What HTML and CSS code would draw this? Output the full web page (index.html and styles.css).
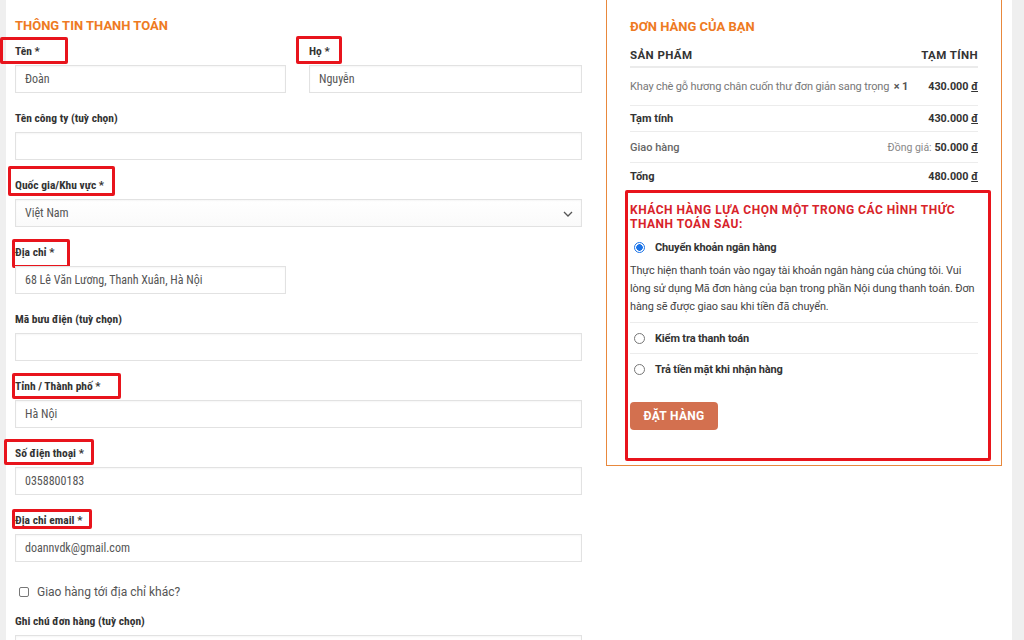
FILE: index.html
```html
<!DOCTYPE html>
<html lang="vi">
<head>
<meta charset="utf-8">
<title>Thanh toán</title>
<link rel="stylesheet" href="styles.css">
</head>
<body>
<div class="page">
  <div class="strip-l"></div>
  <div class="main">
    <section class="billing">
      <h3 class="title">Thông tin thanh toán</h3>
      <div class="row2">
        <div class="field">
          <label class="lbl">Tên *</label>
          <span class="mark mark-ten"></span>
          <div class="inp">Đoàn</div>
        </div>
        <div class="field">
          <label class="lbl">Họ *</label>
          <span class="mark mark-ho"></span>
          <div class="inp">Nguyễn</div>
        </div>
      </div>
      <div class="field">
        <label class="lbl">Tên công ty (tuỳ chọn)</label>
        <div class="inp"></div>
      </div>
      <div class="field">
        <label class="lbl">Quốc gia/Khu vực *</label>
        <span class="mark mark-qg"></span>
        <div class="inp sel">Việt Nam
          <svg class="chev" width="10" height="6" viewBox="0 0 10 6"><path d="M1 1l4 4 4-4" fill="none" stroke="#555" stroke-width="1.3"/></svg>
        </div>
      </div>
      <div class="field">
        <label class="lbl">Địa chỉ *</label>
        <span class="mark mark-dc"></span>
        <div class="inp half">68 Lê Văn Lương, Thanh Xuân, Hà Nội</div>
      </div>
      <div class="field">
        <label class="lbl">Mã bưu điện (tuỳ chọn)</label>
        <div class="inp"></div>
      </div>
      <div class="field">
        <label class="lbl">Tỉnh / Thành phố *</label>
        <span class="mark mark-tp"></span>
        <div class="inp">Hà Nội</div>
      </div>
      <div class="field">
        <label class="lbl">Số điện thoại *</label>
        <span class="mark mark-sdt"></span>
        <div class="inp">0358800183</div>
      </div>
      <div class="field">
        <label class="lbl">Địa chỉ email *</label>
        <span class="mark mark-em"></span>
        <div class="inp">doannvdk@gmail.com</div>
      </div>
      <div class="check">
        <span class="box"></span>
        <span>Giao hàng tới địa chỉ khác?</span>
      </div>
      <div class="field">
        <label class="lbl">Ghi chú đơn hàng (tuỳ chọn)</label>
        <div class="inp tall"></div>
      </div>
    </section>

    <aside class="order-col">
      <div class="order">
        <h3 class="title">Đơn hàng của bạn</h3>
        <div class="row head">
          <span>Sản phẩm</span><span>Tạm tính</span>
        </div>
        <div class="row prod">
          <span class="pname">Khay chè gỗ hương chân cuốn thư đơn giản sang trọng <b class="qty">× 1</b></span>
          <span class="amt">430.000 <u>đ</u></span>
        </div>
        <div class="row sub">
          <span class="k">Tạm tính</span><span class="amt">430.000 <u>đ</u></span>
        </div>
        <div class="row ship">
          <span class="k2">Giao hàng</span><span><span class="flat">Đồng giá:</span> <span class="amt">50.000 <u>đ</u></span></span>
        </div>
        <div class="row total">
          <span class="k">Tổng</span><span class="amt">480.000 <u>đ</u></span>
        </div>

        <div class="pay">
          <h4 class="pay-title">Khách hàng lựa chọn một trong các hình thức thanh toán sau:</h4>
          <div class="opt first">
            <span class="radio on"></span><span class="oname">Chuyển khoản ngân hàng</span>
          </div>
          <p class="desc">Thực hiện thanh toán vào ngay tài khoản ngân hàng của chúng tôi. Vui lòng sử dụng Mã đơn hàng của bạn trong phần Nội dung thanh toán. Đơn hàng sẽ được giao sau khi tiền đã chuyển.</p>
          <div class="opt">
            <span class="radio"></span><span class="oname">Kiểm tra thanh toán</span>
          </div>
          <div class="opt last">
            <span class="radio"></span><span class="oname">Trả tiền mặt khi nhận hàng</span>
          </div>
          <button class="btn">Đặt hàng</button>
        </div>
      </div>
    </aside>
  </div>
  <div class="strip-r"></div>
</div>
</body>
</html>
```

FILE: styles.css
```css
* { box-sizing: border-box; }
html, body { margin: 0; padding: 0; background: #fff; }
body { font-family: Roboto, "Noto Sans", "Liberation Sans", sans-serif; color: #333; }

.page { display: flex; width: 1024px; height: 640px; overflow: hidden; }
.strip-l { width: 6px; flex: none; background: #efefef; }
.strip-r { width: 12px; flex: none; background: #efefef; }
.main { flex: 1; display: flex; gap: 24px; padding-left: 9px; }

.billing { width: 567px; flex: none; padding-top: 16px; }
.title {
  margin: 0; font-size: 13px; line-height: 20px; font-weight: 700;
  text-transform: uppercase; color: #ee7a22; letter-spacing: 0;
}
.billing .title { margin-bottom: 7px; }

.row2 { display: grid; grid-template-columns: 271px 273px; column-gap: 23px; }
.field { position: relative; margin-bottom: 17px; }
.lbl {
  display: block; font-size: 11.5px; line-height: 16px; font-weight: 700; color: #333; margin-bottom: 6px;
  font-stretch: 86%; letter-spacing: 0;
}
.inp {
  position: relative; height: 28px; border: 1px solid #e2e2e2; background: #fff;
  box-shadow: inset 0 1px 2px rgba(0,0,0,0.04);
  padding: 0 9px; font-size: 12px; line-height: 26px; color: #555;
  font-stretch: 87%;
}
.inp.half { width: 271px; }
.inp.tall { height: 60px; }
.sel { background: linear-gradient(#fff, #fafafa); }
.chev { position: absolute; right: 8px; top: 11px; }

.mark { position: absolute; border: 3px solid #e8141c; border-radius: 2px; pointer-events: none; }
.mark-ten { left: -15px; top: -6px; width: 68px; height: 27px; }
.mark-ho { left: -13px; top: -7px; width: 46px; height: 28px; }
.mark-qg { left: -7px; top: -11px; width: 107px; height: 30px; }
.mark-dc { left: -3px; top: -5px; width: 58px; height: 29px; }
.mark-tp { left: -3px; top: -5px; width: 109px; height: 26px; }
.mark-sdt { left: -11px; top: -6px; width: 90px; height: 26px; }
.mark-em { left: -3px; top: -3px; width: 80px; height: 20px; }

.check { display: flex; align-items: center; gap: 8px; height: 20px; margin: 20px 0 11px 4px; font-size: 12px; color: #555; font-stretch: 92%; }
.check .box { width: 10px; height: 10px; border: 1px solid #777; border-radius: 2px; background: #fff; }

/* order */
.order-col { width: 396px; flex: none; }
.order { margin-top: -10px; border: 1px solid #e8883c; padding: 26px 23px 4px; }
.order .title { margin-bottom: 0; }
.row { display: flex; justify-content: space-between; align-items: center; font-size: 11px; }
.row.head { height: 31px; padding-top: 7px; border-bottom: 2px solid #ebebeb; font-size: 11.5px; font-weight: 700; letter-spacing: 0.4px; text-transform: uppercase; color: #333; }
.row.prod { height: 38px; border-bottom: 1px solid #ececec; }
.pname { color: #777; font-size: 11px; white-space: nowrap; letter-spacing: -0.15px; }
.qty { color: #555; font-weight: 700; margin-left: 2px; }
.amt { font-weight: 700; color: #333; font-size: 10.8px; white-space: nowrap; }
.amt u { text-decoration: underline; text-underline-offset: 1px; }
.row.sub { height: 26px; border-bottom: 1px solid #ececec; }
.k { font-weight: 700; color: #333; }
.row.ship { height: 31px; border-bottom: 1px solid #ececec; }
.k2 { color: #666; font-weight: 500; }
.flat { color: #888; font-size: 10.5px; }
.row.total { height: 27px; }

.pay { margin: 0 -13px 0 -5px; border: 3px solid #e8141c; border-radius: 2px; padding: 10px 10px 28px 2px; }
.pay-title { margin: 0 0 2px; font-size: 12px; line-height: 14px; font-weight: 700; color: #d8232a; letter-spacing: 0.5px; text-transform: uppercase; }
.opt { display: flex; align-items: center; height: 31px; border-bottom: 1px solid #ececec; font-size: 11px; }
.opt.first { border-bottom: none; height: 28px; }
.opt.last { border-bottom: none; }
.radio { width: 11px; height: 11px; border: 1px solid #777; border-radius: 50%; margin: 0 10px 0 4px; flex: none; background: #fff; }
.radio.on { border: 1px solid #1a73e8; background: radial-gradient(circle, #1a73e8 0 3px, #fff 3.5px); }
.oname { font-weight: 700; color: #333; letter-spacing: -0.15px; }
.desc { margin: 0; font-size: 10.9px; line-height: 18px; color: #444; padding: 1px 0 6px; border-bottom: 1px solid #ececec; letter-spacing: -0.1px; }
.btn {
  margin-top: 17px; display: block; width: 88px; height: 28px; border: none; border-radius: 4px;
  background: #d3704f; color: #fff; font-family: inherit; font-weight: 700; font-size: 12px;
  text-transform: uppercase; letter-spacing: 0.3px; padding: 0;
}
```
